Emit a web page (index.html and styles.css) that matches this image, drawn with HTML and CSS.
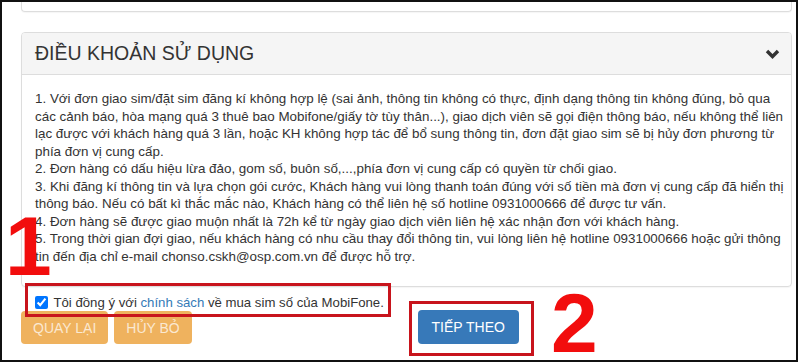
FILE: index.html
```html
<!DOCTYPE html>
<html lang="vi">
<head>
<meta charset="utf-8">
<title>Điều khoản sử dụng</title>
<link rel="stylesheet" href="styles.css">
</head>
<body>
<div class="frame">
  <div class="top-card"></div>
  <section class="panel">
    <div class="panel-head">
      <h2 class="panel-title">ĐIỀU KHOẢN SỬ DỤNG</h2>
      <svg class="chevron" width="15" height="10" viewBox="0 0 15 10" aria-hidden="true">
        <path d="M2 2 L7.5 7.5 L13 2" fill="none" stroke="#333" stroke-width="3.4" stroke-linecap="butt" stroke-linejoin="miter"/>
      </svg>
    </div>
    <div class="panel-body">
      <p class="terms">1. Với đơn giao sim/đặt sim đăng kí không hợp lệ (sai ảnh, thông tin không có thực, định dạng thông tin không đúng, bỏ qua<br>các cảnh báo, hòa mạng quá 3 thuê bao Mobifone/giấy tờ tùy thân...), giao dịch viên sẽ gọi điện thông báo, nếu không thể liên<br>lạc được với khách hàng quá 3 lần, hoặc KH không hợp tác để bổ sung thông tin, đơn đặt giao sim sẽ bị hủy đơn phương từ<br>phía đơn vị cung cấp.<br>2. Đơn hàng có dấu hiệu lừa đảo, gom số, buôn số,...,phía đơn vị cung cấp có quyền từ chối giao.<br>3. Khi đăng kí thông tin và lựa chọn gói cước, Khách hàng vui lòng thanh toán đúng với số tiền mà đơn vị cung cấp đã hiển thị<br>thông báo. Nếu có bất kì thắc mắc nào, Khách hàng có thể liên hệ số hotline 0931000666 để được tư vấn.<br>4. Đơn hàng sẽ được giao muộn nhất là 72h kể từ ngày giao dịch viên liên hệ xác nhận đơn với khách hàng.<br>5. Trong thời gian đợi giao, nếu khách hàng có nhu cầu thay đổi thông tin, vui lòng liên hệ hotline 0931000666 hoặc gửi thông<br>tin đến địa chỉ e-mail chonso.cskh@osp.com.vn để được hỗ trợ.</p>
    </div>
  </section>
  <label class="agree"><input type="checkbox" class="agree-box" checked> Tôi đồng ý với <a class="link" href="#">chính sách</a> về mua sim số của MobiFone.</label>
  <div class="actions">
    <button class="btn btn-warn" type="button">QUAY LẠI</button>
    <button class="btn btn-warn" type="button">HỦY BỎ</button>
    <button class="btn btn-primary" type="button">TIẾP THEO</button>
  </div>

  <div class="mark mark-box-1"></div>
  <div class="mark-num mark-num-1">1</div>
  <div class="mark mark-box-2"></div>
  <div class="mark-num mark-num-2">2</div>
</div>
</body>
</html>
```

FILE: styles.css
```css
* { box-sizing: border-box; }
html, body {
  margin: 0;
  padding: 0;
  background: #fff;
}
body {
  font-family: "Liberation Sans", Arial, sans-serif;
  color: #333;
}
.frame {
  position: relative;
  width: 798px;
  height: 362px;
  border: 2px solid #111;
  padding: 0 5px 0 19px;
  overflow: hidden;
}
.top-card {
  width: 771px;
  height: 10px;
  border: 1px solid #ddd;
  border-top: none;
  border-radius: 0 0 4px 4px;
  box-shadow: 0 1px 1px rgba(0,0,0,0.04);
}
.panel {
  width: 771px;
  margin-top: 20px;
  border: 1px solid #ddd;
  border-radius: 4px;
  box-shadow: 0 1px 1px rgba(0,0,0,0.04);
}
.panel-head {
  display: flex;
  align-items: center;
  justify-content: space-between;
  height: 42px;
  padding: 0 11px 0 13px;
  background: #f5f5f5;
  border-bottom: 1px solid #ddd;
  border-radius: 3px 3px 0 0;
}
.panel-title {
  margin: 0;
  font-size: 19.5px;
  font-weight: normal;
  color: #333;
  line-height: 1;
  padding-top: 1px;
}
.chevron { display: block; margin-top: 1px; }
.panel-body {
  padding: 15px 8px 21px 13px;
}
.terms {
  margin: 0;
  font-size: 13.4px;
  line-height: 17.5px;
  color: #333;
  white-space: nowrap;
}
.agree {
  display: flex;
  align-items: center;
  height: 18px;
  margin-top: 6px;
  padding-left: 14px;
  font-size: 13.2px;
  color: #333;
  white-space: pre;
}
.agree-box {
  width: 13px;
  height: 13px;
  margin: 0 2px 0 0;
}
.link { color: #337ab7; text-decoration: none; }
.actions {
  display: flex;
  align-items: flex-start;
  gap: 6px;
}
.btn {
  font-family: "Liberation Sans", Arial, sans-serif;
  font-size: 14px;
  line-height: 1;
  border: none;
  border-radius: 4px;
  color: #fff;
  padding: 0 12px;
}
.btn-warn {
  height: 33px;
  background: #efb25e;
  color: rgba(255,255,255,0.72);
}
.btn-primary {
  height: 34px;
  margin-left: 220px;
  margin-top: -1px;
  width: 101px;
  background: #3779b9;
}
.mark {
  position: absolute;
  border: 3px solid #c8141c;
}
.mark-box-1 {
  left: 23px;
  top: 281px;
  width: 366px;
  height: 34px;
}
.mark-box-2 {
  left: 407px;
  top: 299px;
  width: 125px;
  height: 55px;
}
.mark-num {
  position: absolute;
  font-family: "Liberation Sans", Arial, sans-serif;
  font-weight: bold;
  font-size: 84px;
  line-height: 0.74;
  color: #f20d0d;
}
.mark-num-1 { left: 3px; top: 213px; }
.mark-num-2 { left: 549px; top: 290px; }
```
